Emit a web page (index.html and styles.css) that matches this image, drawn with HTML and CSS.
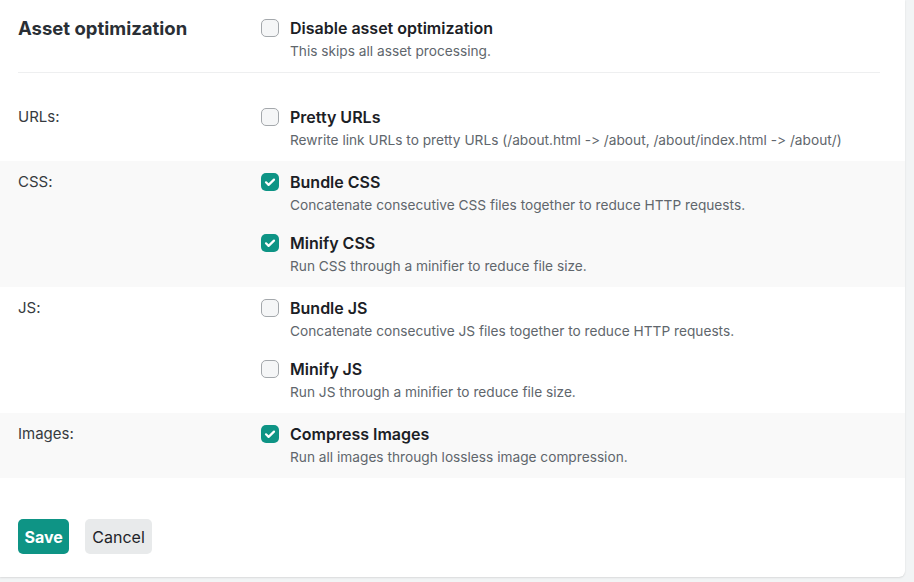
FILE: index.html
```html
<!DOCTYPE html>
<html lang="en">
<head>
<meta charset="utf-8">
<title>Asset optimization</title>
<link rel="stylesheet" href="styles.css">
</head>
<body>
<div class="card">
  <div class="section-head">
    <h2 class="section-title">Asset optimization</h2>
    <div class="options">
      <div class="option">
        <span class="box"></span>
        <div class="option-text">
          <div class="option-label">Disable asset optimization</div>
          <div class="option-desc">This skips all asset processing.</div>
        </div>
      </div>
    </div>
  </div>
  <div class="divider"></div>

  <div class="row">
    <div class="row-label">URLs:</div>
    <div class="options">
      <div class="option">
        <span class="box"></span>
        <div class="option-text">
          <div class="option-label">Pretty URLs</div>
          <div class="option-desc">Rewrite link URLs to pretty URLs (/about.html -&gt; /about, /about/index.html -&gt; /about/)</div>
        </div>
      </div>
    </div>
  </div>

  <div class="row shaded">
    <div class="row-label">CSS:</div>
    <div class="options">
      <div class="option">
        <span class="box checked"><svg viewBox="0 0 18 18" width="18" height="18"><path d="M5 9.3l2.6 2.6L13 6.6" fill="none" stroke="#fff" stroke-width="2.2" stroke-linecap="round" stroke-linejoin="round"/></svg></span>
        <div class="option-text">
          <div class="option-label">Bundle CSS</div>
          <div class="option-desc">Concatenate consecutive CSS files together to reduce HTTP requests.</div>
        </div>
      </div>
      <div class="option">
        <span class="box checked"><svg viewBox="0 0 18 18" width="18" height="18"><path d="M5 9.3l2.6 2.6L13 6.6" fill="none" stroke="#fff" stroke-width="2.2" stroke-linecap="round" stroke-linejoin="round"/></svg></span>
        <div class="option-text">
          <div class="option-label">Minify CSS</div>
          <div class="option-desc">Run CSS through a minifier to reduce file size.</div>
        </div>
      </div>
    </div>
  </div>

  <div class="row">
    <div class="row-label">JS:</div>
    <div class="options">
      <div class="option">
        <span class="box"></span>
        <div class="option-text">
          <div class="option-label">Bundle JS</div>
          <div class="option-desc">Concatenate consecutive JS files together to reduce HTTP requests.</div>
        </div>
      </div>
      <div class="option">
        <span class="box"></span>
        <div class="option-text">
          <div class="option-label">Minify JS</div>
          <div class="option-desc">Run JS through a minifier to reduce file size.</div>
        </div>
      </div>
    </div>
  </div>

  <div class="row shaded">
    <div class="row-label">Images:</div>
    <div class="options">
      <div class="option">
        <span class="box checked"><svg viewBox="0 0 18 18" width="18" height="18"><path d="M5 9.3l2.6 2.6L13 6.6" fill="none" stroke="#fff" stroke-width="2.2" stroke-linecap="round" stroke-linejoin="round"/></svg></span>
        <div class="option-text">
          <div class="option-label">Compress Images</div>
          <div class="option-desc">Run all images through lossless image compression.</div>
        </div>
      </div>
    </div>
  </div>

  <div class="actions">
    <button class="btn btn-primary">Save</button>
    <button class="btn btn-secondary">Cancel</button>
  </div>
</div>
</body>
</html>
```
FILE: styles.css
```css
* { box-sizing: border-box; }
html, body { margin: 0; padding: 0; }
body {
  background: #f2f4f5;
  font-family: Inter, "Noto Sans", sans-serif;
  font-feature-settings: "calt" 0;
  font-variant-ligatures: none;
  width: 914px;
  height: 582px;
  overflow: hidden;
}
.card {
  width: 905px;
  height: 577px;
  background: #fff;
  border-bottom-right-radius: 6px;
  box-shadow: 0 1px 2px rgba(0,0,0,0.10), 0 0 1px rgba(0,0,0,0.06);
  overflow: hidden;
}
.section-head {
  display: grid;
  grid-template-columns: 243px 1fr;
  padding: 16px 0 0 18px;
}
.section-title {
  margin: 0;
  font-size: 18.5px;
  line-height: 24px;
  font-weight: 700;
  color: #2a2f35;
}
.divider {
  height: 1px;
  background: #eeeff0;
  margin: 10px 25px 23px 18px;
}
.row {
  display: grid;
  grid-template-columns: 243px 1fr;
  padding: 9px 0 10px 18px;
}
.row.shaded { background: #f9f9f9; }
.row-label {
  font-size: 15px;
  line-height: 24px;
  color: #363b40;
}
.options {
  display: flex;
  flex-direction: column;
  gap: 15px;
}
.option {
  display: flex;
  gap: 11px;
  align-items: flex-start;
}
.box {
  flex: none;
  width: 18px;
  height: 18px;
  margin-top: 3px;
  border: 1.5px solid #a4a8ac;
  border-radius: 5px;
  background: #f5f6f7;
  display: block;
}
.box.checked {
  border: none;
  background: #0e9485;
}
.box svg { display: block; }
.option-label {
  font-size: 16px;
  line-height: 24px;
  font-weight: 600;
  color: #1b2025;
}
.option-desc {
  font-size: 13.7px;
  line-height: 22px;
  color: #60666c;
}
.actions {
  display: flex;
  gap: 16px;
  padding: 41px 0 0 18px;
}
.btn {
  height: 35px;
  border: none;
  border-radius: 5px;
  font-family: Inter, "Noto Sans", sans-serif;
  font-size: 16px;
  cursor: pointer;
}
.btn-primary {
  background: #0e9485;
  color: #fff;
  font-weight: 700;
  padding: 0 6.5px;
}
.btn-secondary {
  background: #e8eaeb;
  color: #1f2429;
  padding: 0 7px;
}
```
